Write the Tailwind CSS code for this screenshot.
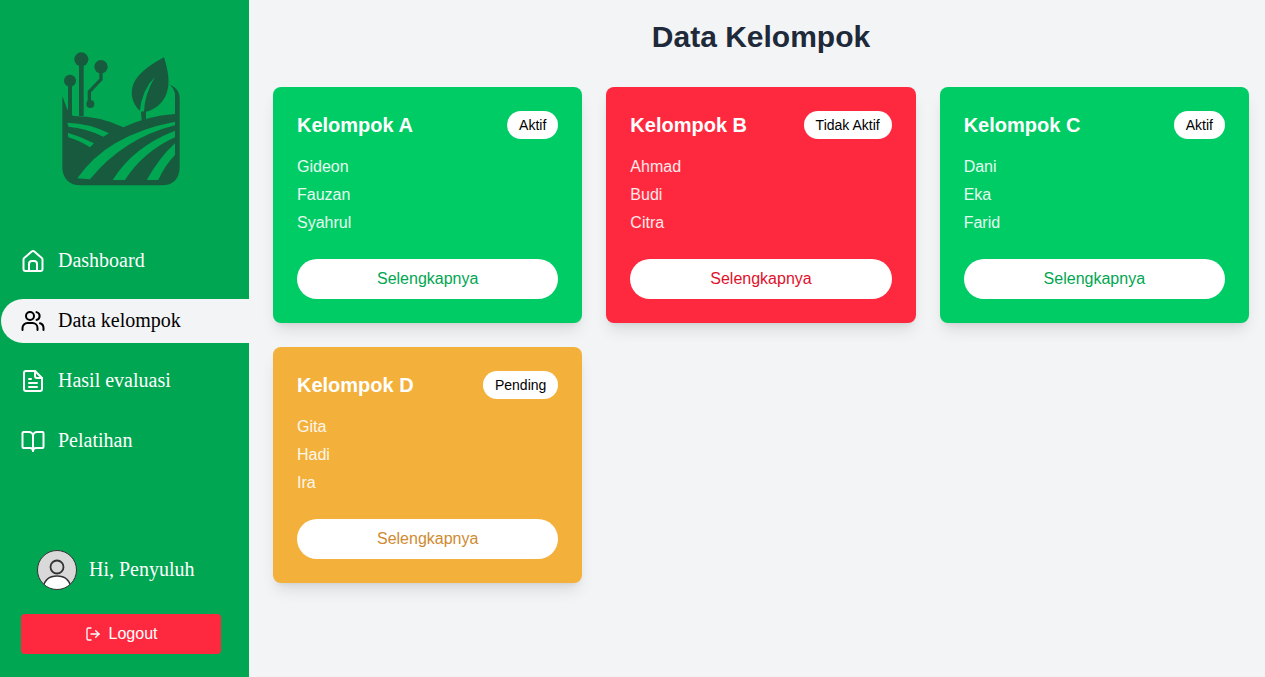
<!DOCTYPE html>
<html>
<head>
<meta charset="utf-8">
<script src="https://cdn.jsdelivr.net/npm/@tailwindcss/browser@4"></script>
<title>Data Kelompok</title>
</head>
<body class="bg-[#f3f4f6] font-['Liberation_Sans',sans-serif]">
<div class="flex h-[677px] overflow-hidden">
  <aside class="w-[249px] shrink-0 bg-[#00a651] flex flex-col font-['Liberation_Serif',serif] text-white">
    <div class="pt-[40px] pl-[40px] flex">
      <svg class="w-[160px] h-[160px]" viewBox="0 0 480 480">
        <g fill="#175a3e">
          <path d="M67 168 L75 190 Q85 222 100 228 Q180 228 250 262 Q320 228 405 222 L405 165 Q405 150 390 135 C410 143 419 155 419 178 L419 380 C419 415 400 436 365 436 L122 436 C88 436 67 415 67 380 Z"/>
          <path d="M372 52 C385 95 392 130 378 165 C365 195 340 210 318 215 L318 240 L305 242 L303 216 C285 200 272 175 276 150 C282 105 330 75 372 52Z"/>
          <circle cx="124" cy="58" r="21"/><circle cx="90" cy="122" r="18"/><circle cx="183" cy="80" r="20"/><circle cx="151" cy="192" r="12"/>
        </g>
        <g fill="none" stroke="#175a3e">
          <path d="M124 58 V228" stroke-width="14"/>
          <path d="M90 122 V228" stroke-width="12"/>
          <path d="M183 80 V118 L148 155 V190" stroke-width="10"/>
        </g>
        <g fill="#00a651">
          <path d="M345 110 Q305 150 299 216 L312 214 Q315 160 345 110Z"/>
          <path d="M82 248 Q150 250 207 280 L190 290 Q140 265 85 260Z"/>
          <path d="M83 278 Q125 290 162 310 L150 322 Q115 300 85 292Z"/>
          <path d="M112 415 Q200 285 405 245 L405 256 Q250 295 150 418Z"/>
          <path d="M218 420 Q280 320 405 272 L405 292 Q310 335 255 420Z"/>
          <path d="M320 420 Q360 350 405 310 L405 345 Q375 375 355 420Z"/>
        </g>
      </svg>
    </div>
    <nav class="mt-[39px] flex flex-col gap-4 pl-[1px] text-[20px]">
      <a class="h-[44px] flex items-center gap-[13px] pl-[20px]">
        <svg class="w-6 h-6" viewBox="0 0 24 24" fill="none" stroke="currentColor" stroke-width="2" stroke-linecap="round" stroke-linejoin="round"><path d="M2.5 10.5a2 2 0 0 1 .7-1.5l7.5-6.4a2 2 0 0 1 2.6 0l7.5 6.4a2 2 0 0 1 .7 1.5V20a2 2 0 0 1-2 2H4.5a2 2 0 0 1-2-2Z"/><path d="M8 22v-7a3 3 0 0 1 3-3h2a3 3 0 0 1 3 3v7"/></svg>
        <span class="pb-[2px]">Dashboard</span>
      </a>
      <a class="h-[44px] flex items-center gap-[13px] pl-[20px] bg-[#f3f4f6] text-black rounded-l-full">
        <svg class="w-6 h-6" viewBox="0 0 24 24" fill="none" stroke="currentColor" stroke-width="2" stroke-linecap="round" stroke-linejoin="round"><circle cx="9" cy="7" r="4"/><path d="M1.5 21v-2a5 5 0 0 1 5-5h5a5 5 0 0 1 5 5v2"/><path d="M15.5 3.1a4 4 0 0 1 0 7.8"/><path d="M22.5 21v-2a5 5 0 0 0-3.5-4.8"/></svg>
        <span class="pb-[2px]">Data kelompok</span>
      </a>
      <a class="h-[44px] flex items-center gap-[13px] pl-[20px]">
        <svg class="w-6 h-6" viewBox="0 0 24 24" fill="none" stroke="currentColor" stroke-width="2" stroke-linecap="round" stroke-linejoin="round"><path d="M14 2H5a2 2 0 0 0-2 2v16a2 2 0 0 0 2 2h14a2 2 0 0 0 2-2V9Z"/><path d="M14 2v5a2 2 0 0 0 2 2h5"/><path d="M8 10h2M8 14h8M8 18h8"/></svg>
        <span class="pb-[2px]">Hasil evaluasi</span>
      </a>
      <a class="h-[44px] flex items-center gap-[13px] pl-[20px]">
        <svg class="w-6 h-6" viewBox="0 0 24 24" fill="none" stroke="currentColor" stroke-width="2" stroke-linecap="round" stroke-linejoin="round"><path d="M12 7v15"/><path d="M2.5 19a1 1 0 0 1-1-1V4a1 1 0 0 1 1-1H8a4 4 0 0 1 4 4 4 4 0 0 1 4-4h5.500a1 1 0 0 1 1 1v14a1 1 0 0 1-1 1H15a3 3 0 0 0-3 3 3 3 0 0 0-3-3Z"/></svg>
        <span class="pb-[2px]">Pelatihan</span>
      </a>
    </nav>
    <div class="mt-auto pl-[21px] pr-[28px] pb-[23px]">
      <div class="flex items-center gap-3 pl-[16px] mb-[24px]">
        <svg class="w-10 h-10" viewBox="0 0 40 40">
          <defs><clipPath id="av"><circle cx="20" cy="20" r="19.5"/></clipPath></defs>
          <circle cx="20" cy="20" r="19.5" fill="#d9d9d9"/>
          <g clip-path="url(#av)">
            <path d="M6 38 Q8 26 20 26 Q32 26 34 38 V40 H6Z" fill="#fff" stroke="#333" stroke-width="1.6"/>
          </g>
          <circle cx="20" cy="17" r="6.5" fill="#d9d9d9" stroke="#333" stroke-width="1.8"/>
          <circle cx="20" cy="20" r="19.5" fill="none" stroke="#333" stroke-width="1"/>
        </svg>
        <span class="text-[20px] pb-[2px]">Hi, Penyuluh</span>
      </div>
      <button class="w-full h-[40px] rounded bg-[#ff293f] flex items-center justify-center gap-[8px] font-['Liberation_Sans',sans-serif] text-base">
        <svg class="w-4 h-4" viewBox="0 0 24 24" fill="none" stroke="currentColor" stroke-width="2" stroke-linecap="round" stroke-linejoin="round"><path d="M9 21H5a2 2 0 0 1-2-2V5a2 2 0 0 1 2-2h4"/><path d="m16 17 5-5-5-5"/><path d="M21 12H9"/></svg>
        <span>Logout</span>
      </button>
    </div>
  </aside>
  <main class="flex-1 pl-6 pr-4 pt-[19px]">
    <h1 class="text-3xl font-bold text-gray-800 text-center mb-8">Data Kelompok</h1>
    <div class="grid grid-cols-3 gap-6">
      <div class="rounded-lg bg-[#00cc66] p-6 text-white shadow-lg">
        <div class="flex items-center justify-between">
          <h2 class="text-xl font-bold">Kelompok A</h2>
          <span class="h-7 px-3 flex items-center rounded-full bg-white text-black text-sm">Aktif</span>
        </div>
        <ul class="mt-[14px] leading-7 text-white/90"><li>Gideon</li><li>Fauzan</li><li>Syahrul</li></ul>
        <button class="mt-[22px] w-full h-10 rounded-full bg-white text-[#00a651]">Selengkapnya</button>
      </div>
      <div class="rounded-lg bg-[#ff293f] p-6 text-white shadow-lg">
        <div class="flex items-center justify-between">
          <h2 class="text-xl font-bold">Kelompok B</h2>
          <span class="h-7 px-3 flex items-center rounded-full bg-white text-black text-sm">Tidak Aktif</span>
        </div>
        <ul class="mt-[14px] leading-7 text-white/90"><li>Ahmad</li><li>Budi</li><li>Citra</li></ul>
        <button class="mt-[22px] w-full h-10 rounded-full bg-white text-[#e0102a]">Selengkapnya</button>
      </div>
      <div class="rounded-lg bg-[#00cc66] p-6 text-white shadow-lg">
        <div class="flex items-center justify-between">
          <h2 class="text-xl font-bold">Kelompok C</h2>
          <span class="h-7 px-3 flex items-center rounded-full bg-white text-black text-sm">Aktif</span>
        </div>
        <ul class="mt-[14px] leading-7 text-white/90"><li>Dani</li><li>Eka</li><li>Farid</li></ul>
        <button class="mt-[22px] w-full h-10 rounded-full bg-white text-[#00a651]">Selengkapnya</button>
      </div>
      <div class="rounded-lg bg-[#f3b03b] p-6 text-white shadow-lg">
        <div class="flex items-center justify-between">
          <h2 class="text-xl font-bold">Kelompok D</h2>
          <span class="h-7 px-3 flex items-center rounded-full bg-white text-black text-sm">Pending</span>
        </div>
        <ul class="mt-[14px] leading-7 text-white/90"><li>Gita</li><li>Hadi</li><li>Ira</li></ul>
        <button class="mt-[22px] w-full h-10 rounded-full bg-white text-[#cf8a32]">Selengkapnya</button>
      </div>
    </div>
  </main>
</div>
</body>
</html>
